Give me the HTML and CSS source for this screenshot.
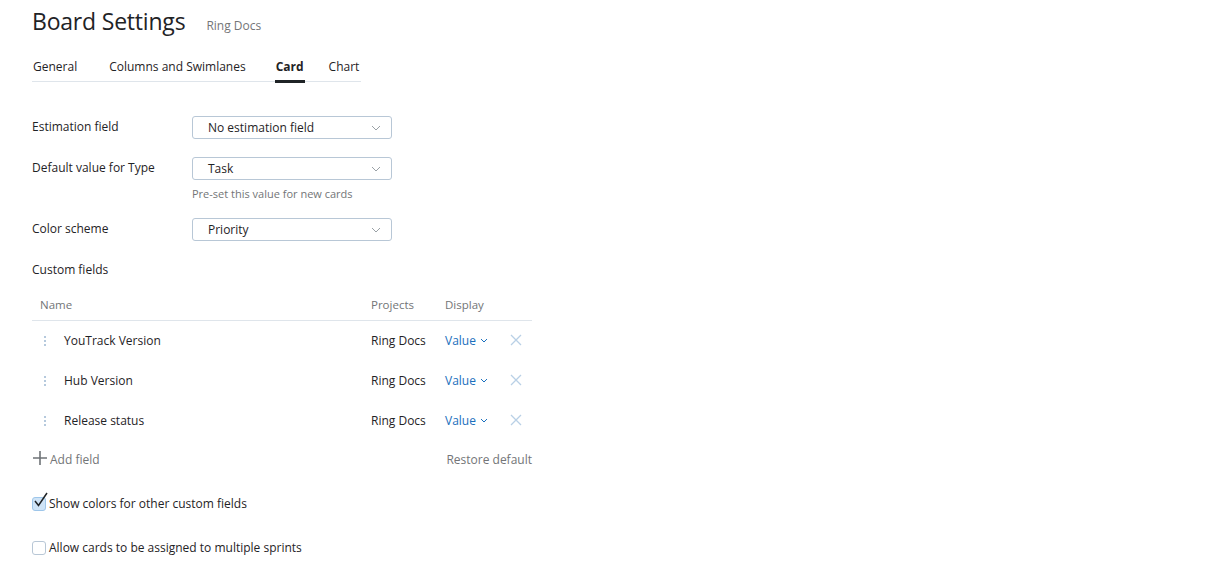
FILE: index.html
```html
<!DOCTYPE html>
<html>
<head>
<meta charset="utf-8">
<link rel="stylesheet" href="styles.css">
</head>
<body>
<div class="page">
  <header class="head">
    <h1 class="title">Board Settings</h1>
    <span class="subtitle">Ring Docs</span>
  </header>
  <nav class="tabs">
    <span class="tab">General</span>
    <span class="tab">Columns and Swimlanes</span>
    <span class="tab active">Card</span>
    <span class="tab">Chart</span>
  </nav>

  <div class="form">
    <div class="row">
      <div class="label">Estimation field</div>
      <div class="control">
        <div class="select"><span>No estimation field</span><svg class="chev" width="10" height="6" viewBox="0 0 10 6"><path d="M1 1l4 4 4-4" fill="none" stroke="#9aa1a6" stroke-width="1"/></svg></div>
      </div>
    </div>
    <div class="row">
      <div class="label">Default value for Type</div>
      <div class="control">
        <div class="select"><span>Task</span><svg class="chev" width="10" height="6" viewBox="0 0 10 6"><path d="M1 1l4 4 4-4" fill="none" stroke="#9aa1a6" stroke-width="1"/></svg></div>
        <div class="hint">Pre-set this value for new cards</div>
      </div>
    </div>
    <div class="row">
      <div class="label">Color scheme</div>
      <div class="control">
        <div class="select"><span>Priority</span><svg class="chev" width="10" height="6" viewBox="0 0 10 6"><path d="M1 1l4 4 4-4" fill="none" stroke="#9aa1a6" stroke-width="1"/></svg></div>
      </div>
    </div>
  </div>

  <div class="section-label">Custom fields</div>
  <div class="table">
    <div class="thead">
      <span class="c-name">Name</span>
      <span class="c-proj">Projects</span>
      <span class="c-disp">Display</span>
    </div>
    <div class="trow">
      <span class="handle"><i></i><i></i><i></i></span>
      <span class="c-name2">YouTrack Version</span>
      <span class="c-proj">Ring Docs</span>
      <span class="c-disp link">Value <svg width="8" height="5" viewBox="0 0 8 5"><path d="M1 1l3 3 3-3" fill="none" stroke="#1a6fbd" stroke-width="1"/></svg></span>
      <span class="c-del"><svg width="12" height="12" viewBox="0 0 12 12"><path d="M1 1l10 10M11 1L1 11" stroke="#b9d0e6" stroke-width="1.3"/></svg></span>
    </div>
    <div class="trow">
      <span class="handle"><i></i><i></i><i></i></span>
      <span class="c-name2">Hub Version</span>
      <span class="c-proj">Ring Docs</span>
      <span class="c-disp link">Value <svg width="8" height="5" viewBox="0 0 8 5"><path d="M1 1l3 3 3-3" fill="none" stroke="#1a6fbd" stroke-width="1"/></svg></span>
      <span class="c-del"><svg width="12" height="12" viewBox="0 0 12 12"><path d="M1 1l10 10M11 1L1 11" stroke="#b9d0e6" stroke-width="1.3"/></svg></span>
    </div>
    <div class="trow">
      <span class="handle"><i></i><i></i><i></i></span>
      <span class="c-name2">Release status</span>
      <span class="c-proj">Ring Docs</span>
      <span class="c-disp link">Value <svg width="8" height="5" viewBox="0 0 8 5"><path d="M1 1l3 3 3-3" fill="none" stroke="#1a6fbd" stroke-width="1"/></svg></span>
      <span class="c-del"><svg width="12" height="12" viewBox="0 0 12 12"><path d="M1 1l10 10M11 1L1 11" stroke="#b9d0e6" stroke-width="1.3"/></svg></span>
    </div>
    <div class="tfoot">
      <span class="add"><svg width="14" height="14" viewBox="0 0 14 14"><path d="M7 0v14M0 7h14" stroke="#6f7377" stroke-width="1.6"/></svg>Add field</span>
      <span class="restore">Restore default</span>
    </div>
  </div>

  <label class="check first">
    <span class="box checked"><svg width="17" height="17" viewBox="0 0 17 17"><path d="M3 9l3.5 4.5L15 1" fill="none" stroke="#1f2326" stroke-width="1.5"/></svg></span>
    <span>Show colors for other custom fields</span>
  </label>
  <label class="check">
    <span class="box"></span>
    <span>Allow cards to be assigned to multiple sprints</span>
  </label>
</div>
</body>
</html>
```
FILE: styles.css
```css
* { box-sizing: border-box; }
html, body { margin: 0; padding: 0; background: #fff; }
body {
  font-family: "Open Sans", "Noto Sans", sans-serif;
  font-size: 12px;
  color: #1f2326;
}
.page { padding: 5px 32px 0 32px; width: 560px; }
.head { display: flex; align-items: baseline; gap: 21px; height: 32px; }
.title { margin: 0; font-size: 23px; font-weight: 400; letter-spacing: -0.2px; line-height: 32px; color: #1f2326; }
.subtitle { font-size: 12px; color: #737577; }

.tabs {
  display: flex;
  width: 329px;
  margin-top: 21px;
  border-bottom: 1px solid #dfe5eb;
  height: 24px;
}
.tab { flex: none; white-space: nowrap; padding: 0 1px; line-height: 18px; margin-right: 28px; position: relative; height: 23px; }
.tab:first-child { margin-right: 30px; }
.tab:nth-child(3) { margin-right: 23px; }
.tab:last-child { margin-right: 0; }
.tab.active { font-weight: 700; }
.tab.active::after {
  content: ""; position: absolute; left: 0; right: 0; bottom: -2px; height: 3px; background: #1f2326;
}

.form { margin-top: 34px; display: flex; flex-direction: column; gap: 18px; }
.row { display: flex; }
.label { width: 160px; line-height: 18px; padding-top: 2px; }
.control { display: flex; flex-direction: column; }
.select {
  width: 200px; height: 23px;
  border: 1px solid #b8c7d6; border-radius: 3px;
  display: flex; align-items: center; justify-content: space-between;
  padding: 0 10px 0 15px;
  line-height: 20px;
}
.chev { margin-top: 1px; }
.hint { color: #737577; font-size: 11px; margin-top: 8px; line-height: 12px; }

.section-label { margin-top: 20px; line-height: 18px; }
.table { width: 500px; margin-top: 17px; }
.thead {
  display: flex; height: 25px; border-bottom: 1px solid #dfe5eb;
  color: #737577; font-size: 11.5px; line-height: 18px;
}
.thead .c-name { padding-left: 8px; width: 339px; }
.c-proj { width: 74px; }
.c-disp { width: 66px; }
.trow { display: flex; align-items: center; height: 40px; padding-bottom: 2px; }
.handle { width: 32px; display: flex; flex-direction: column; align-items: center; gap: 2px; padding-right: 6px; padding-top: 1px; }
.handle i { display: block; width: 2px; height: 2px; background: #b5c9dd; }
.c-name2 { width: 307px; }
.link { color: #1a6fbd; display: flex; align-items: center; gap: 4px; }
.link svg { margin-top: 1px; }
.c-del { display: flex; align-items: center; padding-left: 0; margin-left: -1px; }
.tfoot { display: flex; justify-content: space-between; align-items: center; height: 34px; padding-top: 2px; color: #737577; }
.add { display: flex; align-items: center; gap: 3px; padding-left: 1px; }
.add svg { margin-top: -2px; }

.check { display: flex; align-items: center; gap: 3px; line-height: 18px; height: 24px; }
.check.first { margin-top: 17px; }
.check + .check { margin-top: 20px; }
.box {
  width: 14px; height: 14px; border: 1px solid #b8c7d6; border-radius: 3px;
  position: relative; flex: none;
}
.box.checked { background: #cfe4f7; border-color: #9ec6ea; }
.box svg { position: absolute; left: -1px; top: -6px; }
```
